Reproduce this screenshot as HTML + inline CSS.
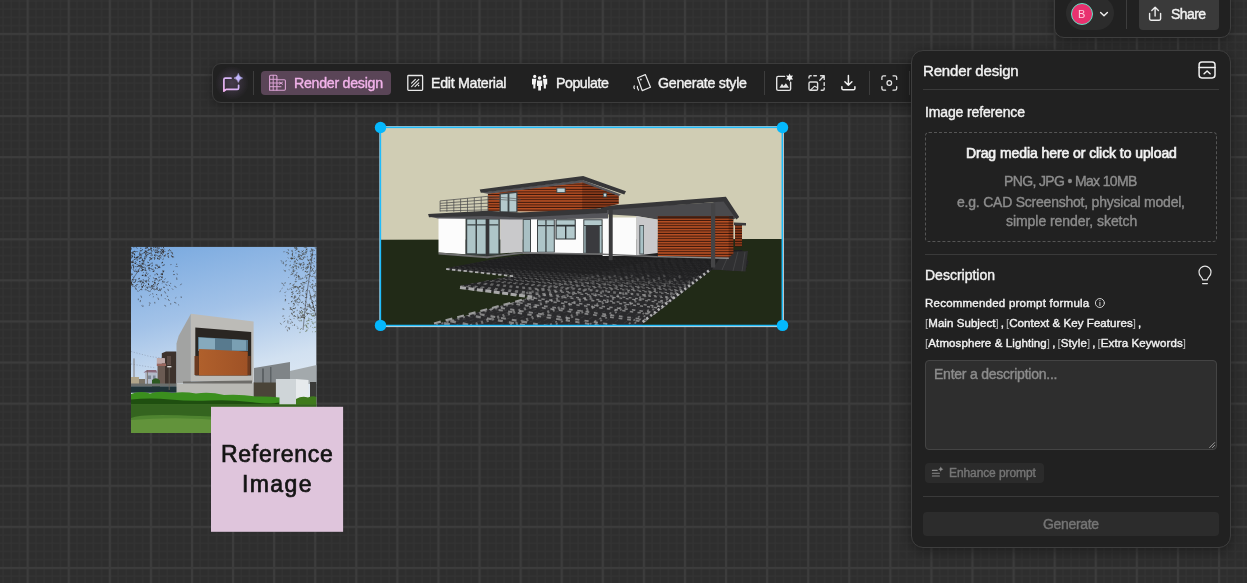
<!DOCTYPE html>
<html lang="en">
<head>
<meta charset="utf-8">
<title>Render design</title>
<style>
*{box-sizing:border-box;margin:0;padding:0}
html,body{width:1247px;height:583px;overflow:hidden;background:#2e2e2e;font-family:"Liberation Sans",sans-serif;color:#f2f2f2}
#canvas{position:absolute;left:0;top:0;width:1247px;height:583px;overflow:hidden}
#grid{position:absolute;left:0;top:0}
.abs{position:absolute}
.t{position:absolute;white-space:nowrap;line-height:1;will-change:transform;-webkit-text-stroke:0.4px currentColor}
/* toolbar */
#toolbar{position:absolute;left:212px;top:63px;width:720px;height:40px;background:#212121;border:1px solid #3c3c3c;border-radius:9px;box-shadow:0 3px 12px rgba(0,0,0,.35)}
.vdiv{position:absolute;width:1px;background:#3d3d3d}
#rd-btn{position:absolute;left:261px;top:71px;width:130px;height:24px;border-radius:4px;background:#5a4557}
/* top right */
#topbar{position:absolute;left:1054px;top:-10px;width:177px;height:48px;background:#212121;border:1px solid #3e3e3e;border-radius:10px;box-shadow:0 3px 12px rgba(0,0,0,.35)}
#avatar-pill{position:absolute;left:1066px;top:-4px;width:48px;height:34px;border-radius:17px;background:#2c2c2c}
#avatar{position:absolute;left:1070.5px;top:3px;width:22px;height:22px;border-radius:50%;background:#e8316f;border:1.5px solid #62e3c4}
#share{position:absolute;left:1139px;top:-4px;width:80px;height:34px;border-radius:4px;background:#3a3a3a}
/* panel */
#panel{position:absolute;left:911px;top:50px;width:320px;height:498px;background:#212121;border:1px solid #3e3e3e;border-radius:12px;box-shadow:0 3px 14px rgba(0,0,0,.4)}
.hdiv{position:absolute;height:1px;background:#3a3a3a}
#drop{position:absolute;left:925px;top:132px;width:292px;height:110px;border:1px dashed #555;border-radius:4px}
#ta{position:absolute;left:925px;top:360px;width:292px;height:90px;background:#2e2e2e;border:1px solid #444;border-radius:4px}
#enh{position:absolute;left:925px;top:462.5px;width:119px;height:20px;background:#2b2b2b;border-radius:4px}
#gen{position:absolute;left:923px;top:512px;width:296px;height:24px;background:#2c2c2c;border-radius:4px}
.t u{text-decoration:none;word-spacing:-1.3px}
.t i{font-style:normal;color:#b4b4b4;-webkit-text-stroke:0}
.grey{color:#8c8c8c}
.dim{color:#757575}
</style>
</head>
<body>
<div id="canvas">
<svg id="grid" width="1247" height="583">
<defs>
<pattern id="minor" x="25.7" y="31.9" width="8.216" height="8.216" patternUnits="userSpaceOnUse">
<path d="M0 2H8.216M2 0V8.216" stroke="#333333" stroke-width="1.1" fill="none"/>
</pattern>
<pattern id="major" x="24.7" y="30.9" width="41.08" height="41.08" patternUnits="userSpaceOnUse">
<path d="M0 3H41.08M3 0V41.08" stroke="#3c3c3c" stroke-width="2.2" fill="none"/>
</pattern>
</defs>
<rect width="1247" height="583" fill="#2e2e2e"/>
<rect width="1247" height="583" fill="url(#minor)"/>
<rect width="1247" height="583" fill="url(#major)"/>
</svg>

<!-- IMGS-START -->
<svg class="abs" style="left:0;top:0" width="1247" height="583">
<defs>
<linearGradient id="sky2" x1="0" y1="0" x2="0.25" y2="1"><stop offset="0" stop-color="#77a8df"/><stop offset=".42" stop-color="#a2c2e8"/><stop offset=".75" stop-color="#d2e1f1"/><stop offset="1" stop-color="#e4ecf4"/></linearGradient>
<linearGradient id="wood2" x1="0" y1="0" x2="1" y2="0"><stop offset="0" stop-color="#b0602c"/><stop offset="1" stop-color="#9f5226"/></linearGradient>
<linearGradient id="pavdark" x1="0" y1="250" x2="0" y2="296" gradientUnits="userSpaceOnUse"><stop offset="0" stop-color="#19191a" stop-opacity=".8"/><stop offset=".45" stop-color="#19191a" stop-opacity=".6"/><stop offset="1" stop-color="#19191a" stop-opacity="0"/></linearGradient>
<clipPath id="refclip"><rect x="131" y="246.7" width="185.6" height="186.4"/></clipPath>
<clipPath id="mainclip"><rect x="380.5" y="127.8" width="401.9" height="197.6"/></clipPath>
<pattern id="stripes" x="0" y="0" width="10" height="2.6" patternUnits="userSpaceOnUse"><rect width="10" height="2.6" fill="#b85023"/><rect y="1.55" width="10" height="1.05" fill="#3a170c"/></pattern>
<pattern id="stripesd" x="0" y="0" width="10" height="2.6" patternUnits="userSpaceOnUse"><rect width="10" height="2.6" fill="#9a411d"/><rect y="1.5" width="10" height="1.1" fill="#2e1209"/></pattern>
</defs>
<g clip-path="url(#refclip)">
<rect x="131" y="246.7" width="185.6" height="186.4" fill="url(#sky2)"/>
<path d="M139.7 252.6l-0.5 -0.8M147.3 262.1l1.6 0.6M129.3 265.1l0.9 0.4M143.3 282.4l0.9 0.8M150.6 287.7l-1.3 -0.7M163.1 248.0l0.8 -1.0M133.2 251.2l-0.8 2.1M134.5 271.6l-0.9 -1.1M147.7 248.8l1.1 0.4M152.5 264.8l-0.7 1.7M144.3 259.2l0.6 -2.0M136.8 271.3l-2.3 -0.4M154.3 258.7l1.0 -0.1M143.1 279.3l1.0 1.4M129.4 275.4l0.2 -1.8M159.5 259.8l-0.6 -1.8M148.9 266.1l1.3 -2.1M145.1 275.2l1.9 0.8M151.3 289.7l0.6 -1.2M141.9 275.4l1.6 0.2M134.0 251.2l2.0 0.8M132.7 256.9l-1.8 1.5M130.9 265.8l-2.3 -0.7M157.5 284.0l-0.3 1.5M140.9 284.9l1.0 -0.3M134.3 256.2l0.2 1.7M149.2 257.6l1.6 0.0M141.3 270.9l2.0 -0.6M146.6 273.2l-0.4 -0.8M160.4 280.3l1.6 -1.6M142.1 263.6l1.5 1.2M130.2 249.0l0.3 1.1M140.2 248.3l1.1 0.0M131.7 262.0l2.3 0.4M150.1 252.5l-0.0 1.4M141.1 251.4l1.5 -2.1M144.8 267.3l0.8 0.5M140.3 257.6l0.5 -1.0M128.8 287.8l-1.0 -0.2M147.6 247.2l-2.5 -0.5M159.1 276.6l-0.1 1.5M134.0 280.0l-2.2 -0.4M139.9 255.8l1.0 -2.4M158.7 281.5l0.9 -1.9M136.2 268.8l-0.5 0.7M129.0 258.3l-0.1 2.0M162.4 265.7l2.4 -1.0M162.4 262.0l0.2 1.2M135.1 255.0l-1.7 -1.7M158.3 267.1l-1.3 -1.8M131.1 275.1l1.9 -1.2M155.0 267.0l1.0 2.0M140.0 281.2l1.5 -0.3M142.4 287.7l-0.2 -1.1M132.6 252.7l1.9 -1.3M133.3 282.4l2.0 -0.2M140.6 270.1l0.6 0.6M163.0 274.6l-2.4 -0.4M143.6 284.4l0.5 -1.0M137.1 258.9l0.1 1.9M137.3 264.4l1.7 1.8M140.7 266.2l-2.1 -1.2M143.1 286.4l-1.8 -0.0M146.8 246.8l-1.1 0.4M128.1 281.2l0.8 1.5M154.1 270.5l-0.8 1.5M148.0 280.5l1.4 1.1M136.9 258.2l0.2 -1.7M148.2 279.4l1.4 -0.8M150.1 268.2l-2.0 -0.2M144.3 269.5l-2.5 0.3M153.2 284.6l1.2 -0.5M148.1 287.5l0.6 -0.9M132.4 265.5l1.1 0.5M130.6 275.5l0.5 -2.4M133.6 277.5l-0.6 -0.9M159.8 288.6l0.5 2.5M142.3 267.4l2.3 -0.1M133.8 265.0l-1.4 -0.1M135.0 260.0l-0.1 -0.8M147.9 265.4l1.4 0.2M150.5 268.5l2.4 1.0M156.4 288.8l1.0 0.8M129.4 280.3l-0.1 1.0M143.2 286.1l0.5 -1.1M133.4 286.4l-1.9 -0.9M131.2 248.5l-0.6 -1.4M130.6 287.3l-1.5 -1.7M131.0 283.7l2.1 1.0M144.3 260.9l-2.3 -0.8M137.6 251.7l-1.2 -0.2M131.9 253.1l1.1 0.4M139.2 259.4l0.1 -1.3M146.0 253.8l-0.5 0.7M137.0 246.7l-0.2 -1.8M134.8 266.9l0.9 -0.4M157.5 265.0l-2.3 0.1M142.2 268.3l-1.0 -2.4M140.3 282.6l-0.5 -1.9M142.6 261.3l1.0 0.3M130.5 278.6l-0.0 1.1M131.0 283.0l1.4 -1.5M138.1 256.7l-0.4 1.6M133.7 265.6l-0.2 2.5M163.0 270.1l0.1 2.5M139.1 261.7l1.5 0.0M145.1 268.1l0.5 1.6M128.2 257.6l1.3 0.8M129.5 247.0l-0.4 1.1M149.1 269.3l0.0 -2.0M153.8 284.7l-1.1 0.9M163.5 252.6l-0.3 -1.9M129.6 282.8l1.5 -1.2M154.4 281.7l1.1 1.3M146.2 282.7l0.8 -2.2M149.0 285.3l-0.8 -1.9M136.3 247.4l1.0 1.1M131.8 282.8l-1.8 -0.7M150.5 275.9l-0.8 0.1M156.7 278.9l-1.8 -0.0M151.7 248.9l-0.1 -1.2M130.7 257.7l-0.2 -1.2M154.6 288.9l-1.5 0.1M145.2 276.1l0.2 -1.9M151.1 249.4l0.8 1.0M154.8 259.4l-0.7 -0.3M130.2 257.8l-1.0 -1.8M152.3 258.8l-1.6 -0.2M144.8 251.2l0.9 -0.7M163.2 287.2l1.6 0.2M157.5 288.6l-1.2 0.4M135.6 287.6l0.5 1.8M133.1 269.1l1.0 -0.3M157.5 268.4l1.6 -1.3M136.3 285.5l-0.8 0.1M128.1 267.6l-1.3 0.4M133.1 261.1l-0.9 2.1M128.1 279.0l0.5 -0.9M161.4 277.4l1.1 -0.8M141.4 263.3l1.9 -0.0M141.0 264.8l-0.1 0.9M131.7 282.7l-0.6 2.4M137.0 257.7l-1.1 -0.1M141.4 288.1l1.7 -1.5M150.7 286.2l1.7 -0.7M153.9 248.2l-0.2 -1.6M155.1 274.4l-0.2 0.9M161.4 251.6l-1.4 0.2M138.7 278.5l1.3 -0.2M151.6 259.2l-1.4 -0.5M134.0 253.1l0.6 2.3M145.9 255.7l2.2 -1.4M144.2 252.1l0.3 0.9M140.3 250.0l0.1 1.3M148.5 285.0l-0.0 -1.5M142.9 269.1l-1.0 1.0M130.2 258.2l1.0 -0.2M146.1 273.7l0.8 -0.9M137.8 256.9l-1.3 0.9M162.3 283.3l0.6 -0.6M129.2 277.2l1.3 -1.0M149.1 246.0l-1.9 1.6M157.7 283.6l1.2 -0.2M131.9 252.8l-2.0 -0.3M161.9 277.8l-1.3 -1.7M144.5 270.3l2.1 0.5M136.4 286.5l-0.8 -1.1M132.6 257.1l-1.3 -1.6M132.0 249.1l-1.8 -0.3M142.0 255.8l-0.7 -0.5M138.9 266.3l1.9 -0.5M159.8 266.9l0.1 1.2M162.6 277.0l-0.3 0.8M145.9 275.7l-1.1 0.6M152.0 286.7l0.1 0.9M140.2 264.5l-0.5 -1.1M156.7 278.5l-1.2 -0.0M162.9 259.7l0.5 -1.1M136.0 279.5l-0.7 2.4M145.8 254.2l0.3 1.5M152.0 287.7l0.9 1.2M135.7 288.9l0.6 0.7M130.2 263.3l1.9 -1.4M154.4 289.9l1.3 -0.6M134.7 287.2l-0.0 -0.9M151.9 262.7l-1.0 1.0M134.1 246.1l-0.3 1.4M162.4 251.4l1.1 -0.3M140.8 282.1l0.7 -1.4M129.8 266.8l-1.7 1.8M134.9 262.0l0.7 -0.5M142.8 281.7l0.1 -0.9M129.3 248.8l1.1 -0.6M154.9 285.5l-0.7 1.1M162.5 273.1l-0.2 2.1M139.4 258.1l2.2 0.1M161.0 273.9l0.8 -0.3M136.4 266.9l2.4 -0.7M141.9 257.0l-1.5 0.7M161.4 254.0l0.7 -2.0M157.6 280.0l-1.1 -0.9M139.5 261.9l0.2 -0.9M135.1 279.1l0.0 0.9M129.2 270.3l-1.2 2.3M159.8 289.5l-0.1 0.9M131.5 267.9l-0.4 -1.6M136.4 264.3l-1.5 -1.4M154.9 283.3l-0.5 -0.9M158.3 258.9l-1.3 -0.6M154.6 254.8l0.0 1.2M133.5 284.9l-1.2 -0.7M142.3 289.7l-1.2 -0.1M157.1 274.7l1.0 -0.1M145.1 282.0l1.3 -2.1M129.5 258.9l0.8 0.8M163.0 271.7l1.3 -0.6M159.2 265.8l-0.1 2.2M162.0 250.7l-1.6 -1.1M135.8 262.2l0.7 0.9M137.2 272.4l-0.7 -1.0M128.4 260.4l-0.5 -1.0M139.2 254.9l0.5 -1.7M130.3 250.5l-1.4 1.1M151.0 250.0l1.1 1.8M142.8 258.5l-0.9 2.4M139.2 270.9l-1.0 1.2M159.1 289.9l-0.8 0.9M154.2 255.0l2.4 0.1M143.3 282.1l-2.0 1.3M144.6 253.2l1.8 0.2M151.1 286.0l1.6 1.0M141.4 268.2l0.8 1.0M146.8 286.7l1.3 1.1M157.0 288.5l0.3 1.0M162.0 288.9l-0.9 0.1M161.3 263.1l1.6 -1.1M157.7 253.1l0.3 -1.2M142.6 283.2l0.5 -1.0M135.9 263.6l-1.5 -0.2M132.4 256.9l-0.4 -2.4M129.5 270.7l0.0 -0.9M158.2 251.2l-1.5 -1.0M150.6 259.5l-1.6 0.9M143.3 275.0l-1.5 0.5M128.8 273.2l-1.2 0.1M155.5 280.3l-1.1 0.3M145.0 250.7l1.1 1.1M131.3 265.4l-0.9 -0.1M150.9 249.6l-0.2 -2.2M146.4 248.4l-1.5 -0.0M162.2 252.0l1.6 -2.0M154.4 281.9l0.9 2.4M145.7 288.1l0.9 -0.6M156.4 286.9l1.3 0.6M155.2 253.0l1.0 -0.8M157.4 252.3l-2.5 -0.0M135.5 257.6l-1.4 -0.1M129.3 254.0l1.3 2.1M152.5 285.4l1.1 1.9M132.1 269.4l-0.9 -1.1" stroke="#2c2622" stroke-width="0.9" stroke-opacity="0.8" fill="none"/>
<path d="M176.4 287.4l-2.1 -1.2M142.6 306.7l-1.0 -1.1M173.1 274.6l1.8 -0.1M153.9 296.6l-1.0 0.4M170.7 265.1l0.5 -1.1M166.1 306.3l-1.7 -1.0M151.8 263.1l1.0 0.2M165.1 282.0l-2.4 -0.2M143.8 273.0l-0.5 -0.7M138.1 278.6l1.1 0.9M147.9 288.7l-1.0 -0.6M165.5 283.9l1.6 1.9M148.7 269.6l1.6 1.1M176.3 297.4l-1.0 0.7M138.5 291.4l-1.3 -0.5M166.4 282.5l2.0 -0.8M148.9 302.8l1.7 0.5M155.9 273.5l2.1 0.8M138.5 287.2l1.0 -0.4M146.8 289.8l-2.0 -0.1M173.8 270.7l-0.5 1.2M140.1 302.1l0.4 -2.0M138.3 300.2l-0.0 -1.6M170.6 282.9l0.1 1.0M148.2 264.7l-1.1 1.8M168.6 300.2l-0.3 -1.2M162.4 282.2l0.4 -1.7M149.7 291.2l1.2 -0.3M176.7 263.7l-0.1 1.2M170.7 304.6l-0.0 -1.4M176.7 277.5l0.2 2.4M165.8 293.5l-1.3 -2.2M158.7 299.9l-0.8 -2.2M157.2 294.9l-1.2 -0.6M147.3 290.4l2.2 1.1M144.4 264.2l1.9 1.5M153.2 269.2l0.9 0.2M168.5 290.9l-0.7 -2.0M140.9 289.0l-1.5 1.7M174.1 302.2l2.2 1.0M178.2 304.6l0.9 0.7M142.9 264.5l1.3 -1.8M165.9 299.3l-0.9 -1.0M142.4 267.3l0.1 -1.2M152.0 281.6l1.3 0.2M150.4 294.5l-0.9 1.0M180.4 285.2l1.1 -1.5M139.4 281.2l-2.0 0.9M153.3 294.0l-1.2 -0.3M175.9 267.0l0.5 -1.0M138.1 271.9l0.2 -2.6M138.2 284.6l-2.2 0.1M146.1 284.8l-1.3 1.9M149.5 304.5l-0.2 1.2M168.8 284.9l1.5 1.2M141.6 297.7l-0.7 -2.1M165.6 278.6l-1.2 0.9M177.2 266.8l0.6 -0.5M147.1 274.6l1.4 -1.0M154.7 301.9l0.2 1.6M161.4 296.2l0.0 -2.0M153.3 277.4l1.3 1.9M167.1 295.6l0.8 1.4M172.0 288.5l1.1 1.2M176.9 273.5l0.5 1.3M168.9 300.1l0.6 0.9M148.9 277.4l-1.1 -0.2M152.4 271.3l2.1 -0.3M142.5 305.3l1.2 0.9M181.3 298.0l-0.2 -1.6" stroke="#2c2622" stroke-width="0.9" stroke-opacity="0.6" fill="none"/>
<path d="M151.5 253.7l0.9 0.7M156.9 246.4l-1.8 1.3M165.4 252.0l-1.1 -1.2M150.0 253.2l-1.8 1.2M171.4 251.2l-1.9 -1.0M157.8 248.7l-0.4 -2.3M167.7 254.4l1.2 -1.6M164.0 251.4l-0.7 1.8M148.7 251.0l0.4 -2.0M163.6 249.0l-1.4 0.7M163.4 250.9l-1.1 -2.2M151.1 253.9l0.3 -1.5M159.7 257.7l1.7 0.4M150.5 255.4l1.6 -0.6M148.8 252.9l-2.0 -0.5M160.3 253.7l0.8 -1.5M157.5 257.4l0.5 2.0M157.0 255.2l1.8 1.8M156.0 246.7l-0.2 1.5M146.4 251.0l-1.8 1.0M155.9 249.2l0.3 2.1M172.3 252.3l0.4 2.2M157.0 248.5l1.5 1.6M168.7 253.6l-1.8 0.3M152.3 257.6l-1.2 1.6M168.9 255.8l-1.3 0.3M161.4 247.5l0.7 -1.2M169.8 249.2l-0.9 0.9M157.9 248.2l2.1 0.0M153.9 248.9l-0.5 1.6M158.0 253.6l-0.8 -1.2M172.0 256.3l2.1 0.8M171.4 255.4l1.5 1.8M163.7 246.2l2.5 0.2M164.4 249.0l0.8 0.6M152.5 255.3l-0.6 0.9M171.3 255.5l1.2 2.1M163.0 255.4l-1.2 -2.1M168.1 256.1l0.7 1.9M160.9 254.9l-2.2 0.9M161.5 249.2l0.1 1.0M159.8 246.7l-1.0 0.2M159.8 252.0l-2.3 -0.6M146.2 256.1l-1.8 0.4M164.6 256.1l-1.1 1.1M172.9 246.9l-1.3 -1.5M146.8 253.3l-1.0 -2.3M155.3 257.8l-1.7 -0.1M171.1 246.4l-0.4 -1.9M155.5 256.3l-1.1 1.2M160.7 255.2l0.4 1.5M157.8 252.6l0.6 -1.2M169.2 250.8l-1.3 -0.0M160.2 257.7l-1.3 -1.8M155.3 249.8l-0.6 1.8M163.8 255.4l2.0 0.5M170.8 252.5l1.3 0.4M146.2 248.3l1.7 -0.9M164.4 255.5l1.6 -1.0M163.3 253.5l-0.6 -1.8" stroke="#3a302a" stroke-width="0.9" stroke-opacity="0.7" fill="none"/>
<path d="M308.7 261.3l-0.8 -1.4M310.8 253.3l0.4 0.8M311.1 311.8l-0.8 -1.2M312.4 302.6l-1.2 -0.5M298.9 276.4l-0.7 1.4M307.7 313.2l1.7 0.6M292.0 254.6l0.7 -1.7M314.9 278.1l1.5 0.1M306.4 313.5l1.6 -0.2M301.7 253.3l-0.7 -0.9M294.9 247.1l2.0 0.1M294.2 315.6l2.0 1.2M294.4 247.3l-0.2 -1.2M310.1 259.5l2.1 0.7M309.6 307.6l-0.1 -0.9M307.3 297.1l-2.4 0.6M297.6 315.4l-0.2 -0.8M291.4 292.9l0.4 -0.9M299.1 298.5l1.2 2.0M303.6 250.3l-1.2 1.4M302.4 294.7l1.4 1.8M300.4 292.4l-1.1 -1.1M301.0 302.6l2.1 -0.8M305.7 267.1l2.4 0.9M309.3 305.6l-0.9 1.6M316.4 305.9l-1.1 -0.8M302.1 309.9l-1.5 1.4M306.6 310.5l0.5 -1.2M291.0 264.9l-1.6 0.9M312.2 309.9l2.2 0.6M312.1 308.4l-1.2 -0.6M313.1 304.1l-1.0 -2.2M300.0 252.1l-2.1 -0.7M296.2 300.0l1.1 -0.5M306.8 294.8l-1.1 0.3M297.6 300.1l0.4 -1.6M293.3 304.1l0.2 -1.2M306.1 310.6l1.3 -1.1M303.4 288.4l0.4 1.1M295.7 296.5l-1.2 1.4M301.5 283.2l0.5 0.7M316.9 272.9l1.5 1.2M311.5 257.2l-1.2 -0.8M304.5 247.5l2.5 0.5M313.5 281.0l-1.2 -0.5M311.3 276.7l2.1 -0.7M312.3 315.4l-0.0 0.9M296.2 259.0l0.8 0.4M305.5 308.7l-2.4 0.6M314.7 250.6l-1.2 -0.9M294.1 315.1l-0.1 1.8M307.7 314.9l-0.7 -1.3M302.7 257.5l2.5 -0.6M296.8 248.8l-0.1 1.4M314.5 311.1l0.5 -0.8M311.4 297.1l-1.6 -2.1M292.4 256.4l0.1 -2.5M308.6 267.5l-1.8 -1.2M293.7 269.3l-0.0 1.0M303.5 258.1l0.1 1.1M308.6 246.9l-0.2 -1.1M291.9 312.8l0.5 2.4M313.5 310.0l1.0 1.2M293.5 312.9l1.1 -1.6M302.8 270.5l0.7 -1.5M307.3 256.3l0.2 0.9M309.6 285.8l1.5 1.9M297.9 275.6l0.7 1.1M312.8 270.1l0.8 1.5M299.3 311.0l1.9 1.7M292.5 310.4l-0.6 -1.0M303.4 266.6l-0.1 1.2M300.5 317.4l2.5 -0.0M293.5 266.8l0.7 -0.5M309.9 267.1l0.8 -0.1M312.0 270.5l0.5 0.6M312.6 283.9l0.6 1.5M314.7 261.7l-0.9 -0.5M295.7 301.5l-0.3 -1.1M293.1 252.3l-1.3 -1.1M298.1 260.8l-1.6 -1.3M312.1 288.0l0.3 0.9M310.1 275.4l-0.2 -0.9M312.1 270.1l1.3 -2.0M303.8 247.1l1.4 -0.9M313.7 265.2l0.9 2.1M300.5 257.8l-1.3 1.4M291.1 283.4l-1.6 0.6M294.1 297.5l1.0 -2.2M299.3 297.2l-1.6 1.5M292.6 308.8l1.6 -0.5M304.3 284.2l-0.8 -0.2M316.2 262.1l0.4 0.9M297.5 304.8l1.0 0.2M309.2 260.0l1.9 0.2M306.0 283.6l-0.3 -0.9M313.6 297.6l1.0 0.3M303.8 282.1l-0.2 1.0M301.5 255.9l-2.0 -1.3M294.8 287.2l-0.0 -1.1M312.5 313.5l-1.2 1.0M312.8 283.8l-2.0 1.5M311.2 270.4l0.1 1.4M302.3 316.6l0.8 -2.3M312.2 307.0l1.6 0.6M315.9 313.3l0.0 1.6M307.4 272.2l-0.9 -0.2M302.3 282.3l1.0 0.1M316.2 301.9l1.8 -0.7M312.0 309.7l0.6 -0.6M307.7 265.1l-0.6 -1.2M305.1 312.6l-0.9 -0.9M304.5 277.2l1.3 -0.4M298.9 292.6l1.4 1.3M315.9 283.0l-0.2 1.6M304.9 256.7l0.7 0.7M298.6 275.3l-0.3 1.2M293.3 285.3l1.0 -1.6M305.8 292.8l0.6 2.0M303.0 285.5l-1.2 -1.1M299.1 263.4l0.3 1.7M301.0 288.2l1.4 0.1M313.4 263.2l-1.6 -0.6M298.4 317.1l-0.6 2.1M295.1 250.8l1.1 -1.2M292.6 273.9l-2.0 0.8M293.8 262.2l2.1 -0.5M295.0 270.3l-1.2 1.6M307.0 307.2l0.7 -1.6M310.2 299.5l0.1 -1.7M311.4 297.0l0.9 -0.5M313.6 246.3l0.2 -1.8M303.9 315.3l-1.4 -0.7M311.4 308.8l-1.2 -0.9M302.8 279.0l-0.2 -1.3M301.2 286.0l-1.0 0.9M311.5 307.2l-1.6 0.0M295.8 267.9l1.1 1.5M306.1 252.3l1.2 -0.7M312.9 306.3l1.1 -0.3M302.1 311.6l0.9 0.1M305.7 281.8l1.9 -1.1M305.0 317.9l-1.7 -0.2M308.8 274.0l-1.2 1.5M300.1 314.2l-0.8 -1.6M293.6 273.0l-1.5 1.1M305.9 309.3l1.6 -0.4M302.4 291.0l1.4 -0.0M304.8 304.7l0.7 1.2M316.4 305.5l-1.0 -0.1M314.3 295.7l1.1 -2.3M314.1 276.3l0.7 1.1M304.3 282.4l0.4 1.0M307.4 289.4l-1.6 2.1M307.5 249.0l-1.9 1.2M299.0 295.7l1.3 0.0M312.9 288.2l-0.6 -1.0M303.9 285.8l-0.2 2.0M304.8 317.8l-1.4 -0.7M294.2 257.3l0.1 -1.0M293.6 258.3l-2.3 -0.3M306.9 304.1l0.8 0.3M311.0 269.2l-0.3 -1.4M295.4 265.2l2.0 1.4M306.1 271.1l-1.4 0.5M292.4 310.1l-2.2 -1.3M302.4 290.7l0.0 0.9M315.2 307.5l-1.0 2.2M312.2 267.9l-2.0 -1.5M303.9 314.4l0.1 1.5M309.7 261.9l-0.9 2.2M303.6 303.1l0.0 1.1M300.3 259.4l1.3 -0.2M305.6 254.3l-1.5 -0.3M301.5 250.7l1.6 1.6M300.1 263.6l0.5 1.2M297.2 248.5l-0.7 -1.2M295.1 296.8l1.1 0.7M312.7 255.2l-2.2 0.8M311.9 257.5l-1.3 1.7M300.8 315.0l0.7 2.4M304.1 262.4l-1.0 0.3M309.4 264.8l1.5 -1.1M300.6 263.7l-0.9 -0.7M313.7 254.8l-1.8 -0.1M298.0 301.6l-1.5 1.3M305.8 268.4l-0.7 0.6M295.6 307.3l-0.9 1.8M293.8 286.5l-1.1 1.3M298.7 250.7l-0.5 1.1M294.3 297.6l-0.3 1.5M314.6 301.8l1.7 -1.6M294.4 265.9l2.0 0.4M308.3 271.3l-1.7 1.0M309.2 263.9l0.8 -1.2M307.3 259.1l1.8 1.6M310.1 297.3l0.8 0.2M295.2 260.3l-0.5 1.4M292.0 268.4l-0.7 -0.9M312.8 287.1l-0.3 -1.2M302.3 295.3l-0.5 0.7M312.7 301.9l-0.2 0.9M313.2 289.7l1.2 0.4M293.9 303.0l0.6 2.4M310.5 252.2l-0.5 -1.4M310.4 305.7l-0.2 0.9M315.6 276.5l1.9 -0.9M310.2 305.8l-1.1 -1.2M292.4 296.3l-1.5 0.7M315.1 255.2l0.1 -0.9M309.3 304.0l-0.1 1.8M316.2 291.9l-1.2 -0.3M292.5 271.8l-1.0 0.6M299.1 255.8l-0.5 -1.9M297.2 263.4l-1.6 -0.2M315.3 271.3l-0.7 2.3M294.7 286.6l-1.1 2.0M305.3 300.8l1.0 1.7M306.6 279.2l0.2 -2.3M294.0 266.8l-0.7 0.9M292.6 266.2l0.7 2.0M302.6 254.1l-0.7 1.5M300.4 258.1l0.7 0.4M316.8 300.0l1.8 1.1M316.5 286.6l1.3 1.1M302.3 259.7l-0.8 -0.2M314.9 292.4l-1.7 -1.8M308.0 264.1l0.0 1.0M291.7 301.8l0.7 -1.1M295.8 291.9l1.4 -2.0M295.4 302.5l1.0 -1.9M299.5 259.3l0.6 -1.2M300.6 285.7l-1.6 1.7M297.2 249.0l-1.8 -0.8M312.3 296.8l2.1 -1.4M303.9 282.0l0.7 1.1M306.1 251.8l-0.4 -1.0M302.5 315.8l0.7 0.5M302.4 259.7l-0.1 -0.8M312.9 307.6l0.4 -1.5M298.4 293.6l-1.6 -0.1M299.8 277.6l-1.2 -2.0M314.5 257.8l-0.5 1.5M305.6 271.1l0.3 0.9M299.4 279.2l2.4 -0.4M313.5 316.2l1.9 -0.5M312.1 250.3l-0.8 -1.7M298.7 287.1l1.6 -0.5M307.8 267.6l-1.3 2.0M291.7 259.6l-0.7 -1.4M293.2 293.6l-1.3 1.3M301.8 284.2l-1.4 -0.6M294.0 259.0l1.4 -1.1M293.9 308.1l-0.0 1.0M304.8 264.1l-1.8 0.1M296.9 287.2l1.3 1.1M306.3 251.8l-0.8 0.5M302.4 308.2l-2.0 -0.7M310.7 254.3l2.1 -0.1M293.7 305.8l-0.9 0.7M316.0 286.5l0.2 -1.0M311.2 250.1l0.1 1.5M291.4 288.8l0.3 1.3M309.4 276.7l1.5 -1.2M313.7 286.5l2.1 -1.2M295.4 299.7l-1.2 1.8M308.7 305.4l1.1 1.0M310.2 314.3l-0.2 -0.9M306.7 253.2l-2.1 -0.7M293.9 312.6l-0.6 -1.1M296.0 278.2l1.0 -1.6M294.0 247.5l1.7 1.4M295.8 285.9l-0.5 2.0M300.9 256.4l1.3 -1.2M308.9 304.2l0.8 -0.3M299.9 256.9l-2.4 -0.0M311.8 248.6l0.9 2.1M308.7 274.3l-1.1 0.2M313.0 274.3l1.3 -1.4M293.0 269.7l0.5 2.4M306.3 249.1l0.7 1.3M303.2 287.5l-1.1 0.9M291.2 287.7l-0.4 0.7M302.9 317.0l1.0 0.3M308.4 265.6l-0.2 1.7M297.8 287.0l-2.5 -0.4M316.8 248.5l-2.0 -0.8M313.7 301.7l-1.3 -1.4M300.4 266.3l0.7 -2.3M315.4 295.1l-0.7 2.1M310.2 282.6l-0.9 -1.1M305.3 275.2l1.3 0.5M299.4 317.2l-1.5 0.2M297.3 262.9l-0.6 0.8M291.2 308.7l-1.5 0.5M305.8 267.8l0.4 0.8M298.8 268.2l-0.3 -1.8M315.4 270.5l1.6 -0.9M293.1 258.9l-2.3 -1.2M300.3 301.8l-2.1 1.0" stroke="#3a3428" stroke-width="0.9" stroke-opacity="0.7" fill="none"/>
<path d="M281.6 288.8l1.0 -0.8M286.2 251.8l0.7 1.1M296.9 267.5l-0.9 0.7M294.5 319.1l-0.7 -0.9M297.6 327.1l-0.8 -0.6M299.4 320.0l-0.6 0.9M284.5 293.0l1.4 -1.4M302.1 267.0l-1.0 1.9M295.6 282.4l-0.6 -1.3M281.4 283.1l1.8 0.5M288.0 289.5l-1.0 -0.7M291.1 251.1l1.6 -0.8M303.7 254.5l-1.6 -1.4M287.9 257.5l0.6 0.9M298.4 257.2l0.6 -1.4M292.9 297.1l-1.9 -0.7M294.4 276.5l-0.1 -1.3M297.1 311.1l0.2 -1.3M298.5 328.2l-1.2 0.4M292.6 325.3l0.6 0.6M291.4 302.4l0.2 -1.4M303.7 268.3l0.0 -1.0M280.7 260.7l1.6 0.6M293.3 264.5l1.4 -0.5M283.6 264.2l-0.2 -2.5M283.9 252.3l0.2 -1.2M303.6 289.9l-0.9 -1.1M299.2 286.8l-1.1 2.2M282.6 308.7l1.8 0.8M289.6 319.1l1.7 0.7M289.8 323.5l1.8 -0.7M285.4 270.2l-0.1 1.6M285.6 266.3l0.1 -2.0M287.2 329.5l0.4 1.8M283.8 319.0l0.9 -0.9M298.0 315.8l-0.3 1.4M291.7 321.3l1.1 1.7M294.3 286.2l-2.1 -1.1M285.0 320.7l-1.4 1.7M300.7 264.6l1.7 -2.0M287.1 252.0l2.0 1.6M280.2 322.9l1.2 1.7M282.3 263.5l-0.4 -0.9M288.1 323.5l-0.5 -2.3M303.5 252.6l0.2 2.2M296.5 253.0l-1.2 -0.0M290.3 258.4l2.6 0.3M287.6 320.3l1.2 1.2M283.3 284.3l0.9 1.8M283.6 309.1l-1.0 -0.0M288.5 289.7l1.2 -0.7M285.2 327.4l1.6 -1.4M286.6 264.2l-0.1 0.9M281.0 290.7l-1.5 1.0M288.7 250.8l-0.7 -1.8M293.1 293.9l-0.9 -2.4M301.0 307.4l-1.1 0.8M290.1 327.8l-1.1 1.0M289.8 261.4l0.8 -0.0M294.6 324.1l-0.1 1.9M289.0 269.3l0.3 1.0M300.2 312.7l0.7 -0.5M296.7 275.9l-1.1 -1.4M287.6 327.7l2.1 0.0M300.5 290.8l-2.2 -1.4M285.6 300.4l-0.1 -1.5M297.1 281.5l-1.9 -0.3M296.3 275.8l-1.2 -1.3M285.4 299.0l-0.2 2.4M291.4 307.7l-1.6 -0.2M285.3 261.4l1.6 -0.8M292.6 292.2l0.5 -1.1M284.1 315.8l-1.9 0.5M299.9 321.5l0.6 -0.6M289.2 316.6l0.4 -0.9M283.7 270.1l1.2 0.9M299.3 291.7l-0.9 0.3M289.5 329.8l-0.5 -1.5M291.5 313.9l0.1 -1.1M296.3 279.4l-1.2 -0.2M288.9 277.2l-0.6 0.6M284.8 295.6l1.0 0.4M297.2 272.0l-0.6 1.1M300.0 257.3l-1.5 -1.8M284.8 283.9l0.5 -1.8M288.9 253.5l-1.4 0.5M297.1 273.6l-1.6 1.1M299.5 278.2l-1.4 1.2M302.2 265.3l2.0 -0.4M288.9 303.2l-0.4 0.8" stroke="#3a3428" stroke-width="0.9" stroke-opacity="0.55" fill="none"/>
<path d="M312.1 319.6l-1.7 -0.3M314.4 327.1l1.8 0.3M307.4 321.2l0.8 -1.3M307.6 329.8l-1.6 0.6M308.2 328.5l-1.0 -1.9M306.4 312.8l-0.8 -1.6M312.3 327.4l0.9 0.8M301.2 328.3l0.8 0.6M312.1 323.3l1.9 0.7M311.4 321.7l1.9 0.7M306.7 323.7l2.3 -0.0M314.0 314.9l-0.9 1.5M300.1 331.8l-0.2 1.3M305.0 317.1l1.1 -1.4M308.2 320.4l1.3 0.4M313.9 328.0l0.8 -1.0M303.2 313.0l-1.4 -0.3M307.4 321.8l-1.3 -0.7M312.8 316.0l1.6 -0.9M300.8 318.3l-1.5 -0.3M309.0 318.5l-0.3 2.2M304.7 326.2l0.6 -1.8M307.3 330.7l-2.2 0.8M300.9 320.7l-0.6 -0.7M313.8 313.4l-0.9 -0.6M314.8 323.2l0.5 -1.6M310.8 325.5l-0.3 1.1M313.4 314.9l1.0 -0.6M301.6 313.9l0.5 -2.5M306.6 325.2l-0.1 2.4M311.0 315.1l1.9 0.7M300.7 328.7l-0.3 1.2M309.3 318.4l-1.0 -0.4M314.6 318.5l0.6 -0.9M312.8 331.6l-0.7 0.5M306.1 324.8l0.3 1.8M301.5 321.3l-0.2 -1.6M310.9 314.3l0.5 -0.9M314.8 331.9l1.6 -0.6M304.7 319.0l0.0 -1.7" stroke="#55603a" stroke-width="0.9" stroke-opacity="0.6" fill="none"/>
<path d="M131 262L142 254L152 248M131 282L140 268L147 256M303 330L306 300L310 272L313 250M316 316L309 290" stroke="#2c2622" stroke-width=".8" fill="none" stroke-opacity=".6"/>
<path d="M161.8 353.2L166 351.6H176.5V384H161.8Z" fill="#3d322c"/>
<path d="M167 356H171V365H167Z" fill="#5a4a44"/>
<path d="M156.8 358H165V363.5H156.8Z" fill="#bfa9a8"/><path d="M156.8 363.5H166V366H156.8Z" fill="#9a675e"/><path d="M157.5 366H165V384H157.5Z" fill="#6a5a52"/>
<path d="M143.5 372.6L147 370H156.2L157.2 372.8Z" fill="#8a6a7c"/><path d="M145 372.8H156.8V383H145Z" fill="#b2bac8"/><path d="M148 375.5H151V379H148ZM153 375.5H155.5V379H153Z" fill="#7d8796"/>
<path d="M131 377H139V386H131Z" fill="#b0a58a"/><path d="M139 379H145V386H139Z" fill="#7a7468"/>
<path d="M152 380Q156 376.5 160 380.5V387H152Z" fill="#2d5a22"/>
<path d="M131 383.4H177V386.8H131Z" fill="#6a6e6c"/>
<path d="M131 386.6H177V392.8H131Z" fill="#1f3338"/>
<path d="M134 358.4V377M147.4 370V384M169.2 367V390" stroke="#6e665e" stroke-width=".8" fill="none"/>
<path d="M167.2 366H171.4V367.4H167.2Z" fill="#d8d8d8"/>
<path d="M131 351.5L150 356.5L165 358.5M131 364L156 368" stroke="#6a7080" stroke-width=".5" stroke-opacity=".7" stroke-dasharray="1.2 1.6" fill="none"/>
<path d="M254 368L290 362V383H254Z" fill="#7f8487"/>
<path d="M290 371L316.6 365V384H290Z" fill="#a3a9ac"/>
<path d="M262 368.5H264V383H262ZM270 367H271.5V383H270Z" fill="#5d6265"/>
<path d="M176.5 343.5L178.6 336L190.9 313.8V382.5L176.5 383.5Z" fill="#a2a3a2"/>
<path d="M190.9 313.8L253.6 321.6V382.4L190.9 381Z" fill="#bcbbb7"/>
<path d="M195.3 327.5L251.2 331.9V375.5H195.3Z" fill="#2a2622"/>
<path d="M198 337L248 340V351H198Z" fill="#587a8e"/>
<path d="M199 337.5L215 338.5V349.5H199Z" fill="#86aabd"/><path d="M232 339.5L246 340.3V350.5H232Z" fill="#7a9fb3"/>
<path d="M198.8 349.1L247.8 351.5V375.5H198.8Z" fill="url(#wood2)"/>
<path d="M194.5 356H198.8V375H194.5ZM247.8 356H250.5V375H247.8Z" fill="#6c3a1f"/>
<path d="M176.5 383.4L253.6 382.4V397H176.5Z" fill="#b9b9b4"/>
<path d="M183 381.5L252 380.5V383.5H183Z" fill="#6e6d69"/>
<path d="M253.6 382.4H276V398H253.6Z" fill="#4a4438"/>
<path d="M275.9 379H296V405H275.9Z" fill="#cfd5d8"/><path d="M296 379L308.5 380V405H296Z" fill="#e6eaec"/>
<path d="M310 382H316.6V397H310Z" fill="#3a3a38"/>
<path d="M131 394Q140 390.5 150 393.5Q160 390.5 172 393Q184 391.5 196 393.5Q210 391.5 224 395Q240 394 256 396.5Q268 396 279.5 397.5V405H131Z" fill="#3b8f1e"/>
<path d="M296 399Q302 395.5 308 397.5Q313 395.5 316.6 397V405H296Z" fill="#3f7a1c"/>
<path d="M131 399.5Q150 397.5 170 399.5T210 400.5T250 402T279 402.5V405H131Z" fill="#1f4f10"/>
<rect x="131" y="404.5" width="185.6" height="29" fill="#4f8430"/>
<path d="M131 404.5H316.6V417Q260 419 200 416T131 418Z" fill="#34641f"/>
<path d="M131 420Q180 416 230 421T316.6 418V433.1H131Z" fill="#6b9a40" fill-opacity=".7"/>
</g>
<rect x="211" y="406.8" width="132.1" height="125" fill="#dfc5dc"/>
<g clip-path="url(#mainclip)">
<rect x="380" y="127" width="403" height="199" fill="#d0cdb4"/>
<path d="M380 239.8L560 239.4L783 239V326H380Z" fill="#212a17"/>
<clipPath id="pavclip"><path d="M446.2 268.3L500 258L560 250L660 250L742 250L748.5 262L745 271L712 269.5L641 325.5H431.7L532.2 296.7L460 288.7V285.8L513.3 275.7L446.2 269.8Z"/></clipPath>
<path d="M446.2 268.3L500 258L560 250L660 250L742 250L748.5 262L745 271L712 269.5L641 325.5H431.7L532.2 296.7L460 288.7V285.8L513.3 275.7L446.2 269.8Z" fill="#2a2a2c"/>
<g clip-path="url(#pavclip)">
<path d="M749 239L300.0 340M749 239L313.0 340M749 239L326.0 340M749 239L339.0 340M749 239L352.0 340M749 239L365.0 340M749 239L378.0 340M749 239L391.0 340M749 239L404.0 340M749 239L417.0 340M749 239L430.0 340M749 239L443.0 340M749 239L456.0 340M749 239L469.0 340M749 239L482.0 340M749 239L495.0 340M749 239L508.0 340M749 239L521.0 340M749 239L534.0 340M749 239L547.0 340M749 239L560.0 340M749 239L573.0 340M749 239L586.0 340M749 239L599.0 340M749 239L612.0 340M749 239L625.0 340M749 239L638.0 340M749 239L651.0 340M749 239L664.0 340M749 239L677.0 340M749 239L690.0 340M749 239L703.0 340M749 239L716.0 340M749 239L729.0 340M749 239L742.0 340M749 239L755.0 340" stroke="#6a6a6c" stroke-width=".8" stroke-opacity=".3" stroke-dasharray="4 3" fill="none"/>
<path d="M380 310.0L800 397.6" stroke="#a2a2a2" stroke-width="2.60" stroke-opacity="0.75" stroke-dasharray="5.8 7.3" stroke-dashoffset="0.0" fill="none"/>
<path d="M380 307.0L800 391.0" stroke="#a2a2a2" stroke-width="2.50" stroke-opacity="0.75" stroke-dasharray="5.6 7.0" stroke-dashoffset="3.9" fill="none"/>
<path d="M380 299.4L800 374.0" stroke="#a2a2a2" stroke-width="2.22" stroke-opacity="0.75" stroke-dasharray="5.0 6.2" stroke-dashoffset="3.5" fill="none"/>
<path d="M380 297.2L800 369.2" stroke="#a2a2a2" stroke-width="2.14" stroke-opacity="0.75" stroke-dasharray="4.8 6.0" stroke-dashoffset="6.7" fill="none"/>
<path d="M380 291.6L800 356.6" stroke="#a2a2a2" stroke-width="1.93" stroke-opacity="0.75" stroke-dasharray="4.3 5.4" stroke-dashoffset="6.1" fill="none"/>
<path d="M380 289.9L800 352.9" stroke="#a2a2a2" stroke-width="1.87" stroke-opacity="0.75" stroke-dasharray="4.2 5.2" stroke-dashoffset="0.0" fill="none"/>
<path d="M380 285.6L800 343.1" stroke="#a2a2a2" stroke-width="1.71" stroke-opacity="0.75" stroke-dasharray="3.8 4.8" stroke-dashoffset="0.0" fill="none"/>
<path d="M380 284.3L800 340.2" stroke="#a2a2a2" stroke-width="1.66" stroke-opacity="0.75" stroke-dasharray="3.7 4.7" stroke-dashoffset="2.6" fill="none"/>
<path d="M380 280.8L800 332.4" stroke="#a2a2a2" stroke-width="1.54" stroke-opacity="0.75" stroke-dasharray="3.4 4.3" stroke-dashoffset="2.4" fill="none"/>
<path d="M380 279.7L800 330.0" stroke="#a2a2a2" stroke-width="1.50" stroke-opacity="0.75" stroke-dasharray="3.4 4.2" stroke-dashoffset="4.7" fill="none"/>
<path d="M380 276.9L800 323.7" stroke="#a2a2a2" stroke-width="1.39" stroke-opacity="0.75" stroke-dasharray="3.1 3.9" stroke-dashoffset="4.4" fill="none"/>
<path d="M380 276.0L800 321.7" stroke="#a2a2a2" stroke-width="1.36" stroke-opacity="0.75" stroke-dasharray="3.0 3.8" stroke-dashoffset="0.0" fill="none"/>
<path d="M380 273.6L800 316.4" stroke="#a2a2a2" stroke-width="1.27" stroke-opacity="0.75" stroke-dasharray="2.9 3.6" stroke-dashoffset="0.0" fill="none"/>
<path d="M380 272.9L800 314.8" stroke="#a2a2a2" stroke-width="1.25" stroke-opacity="0.75" stroke-dasharray="2.8 3.5" stroke-dashoffset="2.0" fill="none"/>
<path d="M380 270.9L800 310.4" stroke="#a2a2a2" stroke-width="1.17" stroke-opacity="0.75" stroke-dasharray="2.6 3.3" stroke-dashoffset="1.8" fill="none"/>
<path d="M380 270.3L800 309.0" stroke="#a2a2a2" stroke-width="1.15" stroke-opacity="0.75" stroke-dasharray="2.6 3.2" stroke-dashoffset="3.6" fill="none"/>
<path d="M380 268.6L800 305.2" stroke="#a2a2a2" stroke-width="1.09" stroke-opacity="0.75" stroke-dasharray="2.5 3.1" stroke-dashoffset="3.5" fill="none"/>
<path d="M380 268.1L800 304.0" stroke="#a2a2a2" stroke-width="1.07" stroke-opacity="0.75" stroke-dasharray="2.5 3.1" stroke-dashoffset="0.0" fill="none"/>
<path d="M380 266.6L800 300.7" stroke="#a2a2a2" stroke-width="1.01" stroke-opacity="0.75" stroke-dasharray="2.5 3.1" stroke-dashoffset="0.0" fill="none"/>
<path d="M380 266.1L800 299.6" stroke="#a2a2a2" stroke-width="1.00" stroke-opacity="0.75" stroke-dasharray="2.5 3.1" stroke-dashoffset="1.8" fill="none"/>
<path d="M380 264.8L800 296.7" stroke="#a2a2a2" stroke-width="0.95" stroke-opacity="0.5" stroke-dasharray="2.5 3.1" stroke-dashoffset="1.8" fill="none"/>
<path d="M380 264.4L800 295.8" stroke="#a2a2a2" stroke-width="0.93" stroke-opacity="0.5" stroke-dasharray="2.5 3.1" stroke-dashoffset="3.5" fill="none"/>
<path d="M380 263.3L800 293.3" stroke="#a2a2a2" stroke-width="0.89" stroke-opacity="0.5" stroke-dasharray="2.5 3.1" stroke-dashoffset="3.5" fill="none"/>
<path d="M380 262.9L800 292.5" stroke="#a2a2a2" stroke-width="0.88" stroke-opacity="0.5" stroke-dasharray="2.5 3.1" stroke-dashoffset="0.0" fill="none"/>
<path d="M380 261.9L800 290.2" stroke="#a2a2a2" stroke-width="0.84" stroke-opacity="0.5" stroke-dasharray="2.5 3.1" stroke-dashoffset="0.0" fill="none"/>
<path d="M380 261.1L800 288.5" stroke="#a2a2a2" stroke-width="0.81" stroke-opacity="0.5" stroke-dasharray="2.5 3.1" stroke-dashoffset="1.8" fill="none"/>
<path d="M380 259.1L800 283.9" stroke="#a2a2a2" stroke-width="0.74" stroke-opacity="0.25" stroke-dasharray="2.5 3.1" stroke-dashoffset="1.8" fill="none"/>
<path d="M380 258.5L800 282.5" stroke="#a2a2a2" stroke-width="0.72" stroke-opacity="0.25" stroke-dasharray="2.5 3.1" stroke-dashoffset="3.5" fill="none"/>
<path d="M380 256.9L800 279.0" stroke="#a2a2a2" stroke-width="0.66" stroke-opacity="0.25" stroke-dasharray="2.5 3.1" stroke-dashoffset="3.5" fill="none"/>
<path d="M380 256.4L800 277.9" stroke="#a2a2a2" stroke-width="0.64" stroke-opacity="0.25" stroke-dasharray="2.5 3.1" stroke-dashoffset="0.0" fill="none"/>
<path d="M380 255.1L800 275.0" stroke="#a2a2a2" stroke-width="0.60" stroke-opacity="0.25" stroke-dasharray="2.5 3.1" stroke-dashoffset="0.0" fill="none"/>
<path d="M380 254.7L800 274.1" stroke="#a2a2a2" stroke-width="0.60" stroke-opacity="0.25" stroke-dasharray="2.5 3.1" stroke-dashoffset="1.8" fill="none"/>
<path d="M380 253.6L800 271.7" stroke="#a2a2a2" stroke-width="0.60" stroke-opacity="0.25" stroke-dasharray="2.5 3.1" stroke-dashoffset="1.8" fill="none"/>
<path d="M380 253.3L800 271.0" stroke="#a2a2a2" stroke-width="0.60" stroke-opacity="0.25" stroke-dasharray="2.5 3.1" stroke-dashoffset="3.5" fill="none"/>
<path d="M380 252.4L800 269.0" stroke="#a2a2a2" stroke-width="0.60" stroke-opacity="0.25" stroke-dasharray="2.5 3.1" stroke-dashoffset="3.5" fill="none"/>
<path d="M380 252.2L800 268.4" stroke="#a2a2a2" stroke-width="0.60" stroke-opacity="0.25" stroke-dasharray="2.5 3.1" stroke-dashoffset="0.0" fill="none"/>
<path d="M380 251.4L800 266.7" stroke="#a2a2a2" stroke-width="0.60" stroke-opacity="0.25" stroke-dasharray="2.5 3.1" stroke-dashoffset="0.0" fill="none"/>
<path d="M380 251.2L800 266.2" stroke="#a2a2a2" stroke-width="0.60" stroke-opacity="0.25" stroke-dasharray="2.5 3.1" stroke-dashoffset="1.8" fill="none"/>
<path d="M380 250.5L800 264.8" stroke="#a2a2a2" stroke-width="0.60" stroke-opacity="0.25" stroke-dasharray="2.5 3.1" stroke-dashoffset="1.8" fill="none"/>
<path d="M330.0 340L598.2 275.4M336.0 340L600.3 275.4M376.0 340L614.7 275.4M382.0 340L616.9 275.4M422.0 340L631.3 275.4M428.0 340L633.4 275.4M468.0 340L647.8 275.4M474.0 340L650.0 275.4M514.0 340L664.4 275.4M520.0 340L666.6 275.4M560.0 340L681.0 275.4M566.0 340L683.1 275.4M606.0 340L697.5 275.4M612.0 340L699.7 275.4M652.0 340L714.1 275.4M658.0 340L716.2 275.4M698.0 340L730.6 275.4M704.0 340L732.8 275.4" stroke="#a4a4a4" stroke-width="1.7" stroke-opacity=".6" stroke-dasharray="2 3.6" fill="none"/>
<path d="M440 248H760V300H440Z" fill="url(#pavdark)"/>
</g>
<path d="M446.2 269L513.3 276.2" stroke="#b0b0b0" stroke-width="1.8" stroke-dasharray="3.4 2.4" fill="none"/>
<path d="M708.9 270.6L641 323.2" stroke="#b4b4b4" stroke-width="2.6" stroke-dasharray="2.2 2.6" fill="none"/>
<path d="M460 287.5L532.2 297" stroke="#a8a8a8" stroke-width="3" stroke-dasharray="6 2.5" fill="none"/>
<path d="M434 323.5L532 297.2" stroke="#9a9a9a" stroke-width="2.2" stroke-dasharray="7 5" fill="none"/>
<path d="M724 252L748 251L745.5 271.5L712 269.5Z" fill="#303032"/>
<path d="M730 252L722 270M738 251.5L733 271M745 252L742 271.3" stroke="#4c4c4e" stroke-width=".7" fill="none"/>
<path d="M735 225H742V246.5H735Z" fill="url(#stripesd)"/>
<path d="M734 222.6L746 222.9V225.6L734 225.3Z" fill="#3a3a3c"/>
<path d="M601 209L712 202.5L726 199.5L737.5 217L733.5 219.5H657.8L636 216L601 214Z" fill="#4a4a4d"/>
<path d="M601 206.2L725.9 196.8L739.2 217L736.4 219.6L723.6 201.4L601 210.6Z" fill="#363638"/>
<path d="M602.6 217.5H636.2V256H602.6Z" fill="#fbfbfb"/>
<path d="M636.2 216L657.8 219.7V252.9L636.2 255.4Z" fill="#c9c9cb"/>
<path d="M639.3 225H644V254.4H639.3Z" fill="#4d5557"/><path d="M640.3 226H643.2V253.6H640.3Z" fill="#a9c2c6"/>
<path d="M657.8 216H729.2V257.5L657.8 256Z" fill="url(#stripes)"/>
<path d="M728.6 218.2L733.4 219.5V253.7L728.6 257.5Z" fill="url(#stripesd)"/>
<path d="M657.8 256L728.8 257.5L728.8 259L657.8 257.3Z" fill="#8a8a8a"/>
<path d="M657.8 216H733.4V219L728.8 218.6H657.8Z" fill="#2a1a14" fill-opacity=".75"/>
<path d="M487.9 193.4L583 182V212L487.9 211Z" fill="url(#stripes)"/>
<path d="M582.2 181.5L618.8 195.5V204L582.2 212Z" fill="url(#stripesd)"/>
<path d="M499.5 193.4L517.5 191.5V212.5H499.5Z" fill="#3d4446"/>
<path d="M500.8 194.6L507.6 193.9V211.6H500.8ZM509.4 193.7L516.3 193V211.6H509.4Z" fill="#b4c9cc"/>
<rect x="556.3" y="187.6" width="9.4" height="5.4" fill="#44494b"/><rect x="557.3" y="188.5" width="7.4" height="3.6" fill="#bcd2d6"/>
<rect x="603" y="192.8" width="4" height="4.4" fill="#44494b"/><rect x="603.8" y="193.6" width="2.4" height="2.8" fill="#bcd2d6"/>
<path d="M481 192.4L582.5 180L621 194.5L618.8 196L582.5 182.6L487.9 193.8Z" fill="#55555a"/>
<path d="M479.7 189.4L583.2 175.9L626 191.2L624.3 194.4L582.8 180.2L480.8 192.8Z" fill="#363638"/>
<path d="M440.1 200.9L488 196.3M440.1 203.4L488 199.7M440.1 205.9L488 203.1M440.1 208.4L488 206.5M440.1 210.9L488 209.9M440.1 200.9V211.6M446.9 200.2V211.7M453.8 199.6V211.8M460.6 198.9V211.9M467.5 198.3V211.9M474.3 197.6V212.0M481.2 197.0V212.1M488.0 196.3V212.2" stroke="#4d4d4d" stroke-width=".75" fill="none"/>
<path d="M488 196.3L520 199V201L488 198.6" stroke="#555" stroke-width=".6" fill="none"/>
<path d="M438.5 217.5H465.6V254.2L438.5 252.6Z" fill="#fcfcfc"/>
<path d="M465.6 218H499.8V254.6L487 256L465.6 254.4Z" fill="#3b4244"/>
<path d="M467.2 219.4H475.5V253.2H467.2ZM477 219.4H485.6V253.8H477ZM489.4 219.4H498.4V253.4H489.4Z" fill="#aec5c8"/>
<path d="M467.2 224.2H498.4V225.6H467.2Z" fill="#3b4244"/>
<path d="M486 214H488.8V258.5H486Z" fill="#333335"/>
<path d="M500.3 218L522.7 218.4V251.9L500.3 253.6Z" fill="#c9c9cb"/>
<path d="M522.7 218.4H602.6V253.5H522.7Z" fill="#fcfcfc"/>
<path d="M522.7 219H531V252.6H522.7Z" fill="#3b4244"/><path d="M523.6 220H530V251.8H523.6Z" fill="#a9c0c4"/>
<path d="M537 219.2H554.8V252.6H537Z" fill="#3b4244"/><path d="M538 220.2H545.3V251.8H538ZM546.6 220.2H553.8V251.8H546.6Z" fill="#aec5c8"/><path d="M537 225H554.8V226.2H537Z" fill="#3b4244"/>
<path d="M555.5 219.2H575.8V239.6H555.5Z" fill="#2f3436"/><path d="M556.6 220.2H574.7V224.8H556.6ZM556.6 226.4H565V238.4H556.6ZM566.4 226.4H574.7V238.4H566.4Z" fill="#b3c9cc"/>
<path d="M583.3 219.2H602.6V253.4H583.3Z" fill="#3b4244"/><path d="M584.3 220.2H601.6V225H584.3Z" fill="#b3c9cc"/><path d="M586.4 226H598.8V253.4H586.4Z" fill="#3a3a3e"/><path d="M584.3 226H585.6V252.8H584.3ZM599.8 226H601.6V252.8H599.8Z" fill="#a9c0c4"/>
<path d="M438.5 252.6L487 256.2L522.7 252L602.6 253.4L657.8 256V257.6L602.6 255L522.7 253.8L487 258.2L438.5 254.4Z" fill="#6f6f70"/>
<path d="M429.3 216.4L487.2 215.4L520 216.6L608 212.4V218.4L520 219.6L487.2 219L438 218.4Z" fill="#55555a"/>
<path d="M428.1 214.1L487.2 210.8L520 212.6L607 208V213L520 217.4L487.2 216L429 217.2Z" fill="#363638"/>
<path d="M608.8 209H612.7V260.2H608.8Z" fill="#3a3a3c"/>
<path d="M711 203.5H715.2V267.6H711Z" fill="#444446"/>
</g>
<rect x="379.9" y="126.7" width="403.4" height="199.9" fill="none" stroke="#ebe7e3" stroke-width="1"/>
<rect x="380.4" y="127.35" width="401.9" height="198.15" fill="none" stroke="#1fbcfb" stroke-width="1.5"/>
<circle cx="380.5" cy="127.5" r="5.7" fill="#04b8fd"/>
<circle cx="782.5" cy="127.5" r="5.7" fill="#04b8fd"/>
<circle cx="380.5" cy="325.4" r="5.7" fill="#04b8fd"/>
<circle cx="782.5" cy="325.4" r="5.7" fill="#04b8fd"/>
</svg>
<!-- IMGS-END -->

<span class="t" id="t-ref" style="left:220.6px;top:443.2px;font-size:23px;color:#141414;-webkit-text-stroke:0.7px #141414;letter-spacing:0.72px">Reference</span>
<span class="t" id="t-img" style="left:241.5px;top:472.6px;font-size:23px;color:#141414;-webkit-text-stroke:0.7px #141414;letter-spacing:1.4px">Image</span>
<!-- toolbar -->
<div id="toolbar"></div>
<div class="vdiv" style="left:252.5px;top:71px;height:24px"></div>
<div id="rd-btn"></div>
<span class="t" id="t-rd" style="left:293.7px;top:76px;font-size:14.2px;color:#f2b3ea;letter-spacing:-0.266px">Render design</span>
<span class="t" id="t-em" style="left:431.3px;top:76px;font-size:14.2px;letter-spacing:-0.280px">Edit Material</span>
<span class="t" id="t-po" style="left:555.8px;top:76px;font-size:14.2px;letter-spacing:-0.459px">Populate</span>
<span class="t" id="t-gs" style="left:658.0px;top:76px;font-size:14.2px;letter-spacing:-0.252px">Generate style</span>
<div class="vdiv" style="left:763.5px;top:71px;height:24px"></div>
<div class="vdiv" style="left:868.5px;top:71px;height:24px"></div>
<div class="vdiv" style="left:909px;top:71px;height:24px"></div>
<svg class="abs" style="left:0;top:0;pointer-events:none" width="1247" height="583" fill="none" stroke-linecap="round" stroke-linejoin="round">
<defs>
<linearGradient id="chatg" x1="223" y1="91" x2="241" y2="75" gradientUnits="userSpaceOnUse"><stop offset="0" stop-color="#f3b2f0"/><stop offset="1" stop-color="#b9b6ff"/></linearGradient>
<radialGradient id="glow" cx="232" cy="83" r="17" gradientUnits="userSpaceOnUse"><stop offset="0" stop-color="#b48bd0" stop-opacity=".26"/><stop offset="1" stop-color="#b48bd0" stop-opacity="0"/></radialGradient>
</defs>
<circle cx="232" cy="83" r="17" fill="url(#glow)"/>
<!-- chat sparkle icon -->
<path d="M231 78.2H225.3Q223.9 78.2 223.9 79.6V91.2L226.2 89.3H237.2Q238.6 89.3 238.6 87.9V85.3" stroke="url(#chatg)" stroke-width="1.7"/>
<path d="M238.3 73.8Q239.2 77.2 242.6 78.1Q239.2 79 238.3 82.4Q237.4 79 234 78.1Q237.4 77.2 238.3 73.8Z" fill="url(#chatg)" stroke="url(#chatg)" stroke-width=".5"/>
<!-- render design icon -->
<g stroke="#dca3d6" stroke-width="1.1">
<path d="M270.6 75.3H275.8Q276.9 75.3 276.9 76.4V90.2H269.6V76.3Q269.6 75.3 270.6 75.3Z"/>
<path d="M276.9 79.7H284.3Q285.4 79.7 285.4 80.8V89.1Q285.4 90.2 284.3 90.2H276.9"/>
<path d="M273.2 75.3V90.2M269.6 79.3H276.9M269.6 83H281M269.6 86.7H281M279.5 82.2L282.5 84.2M282.5 82.2L279.5 84.2" stroke-width="1"/>
</g>
<!-- edit material -->
<g stroke="#e9e9e9" stroke-width="1.3">
<rect x="407.8" y="75.5" width="14.8" height="14.9" rx="0.8"/>
<path d="M411.6 83.2L415.4 79.4M411.6 86.6L418.8 79.4M415 86.6L418.8 82.8" stroke-width="1.1"/>
</g>
<circle cx="418.6" cy="85.6" r="0.8" fill="#e9e9e9"/>
<!-- populate -->
<g fill="#f4f4f4">
<circle cx="534.7" cy="76.4" r="1.6"/><path d="M532 78.7H536.3L535.6 84.4H535.4V88.6H533.3V84.4H532Z"/>
<circle cx="544.5" cy="76.4" r="1.6"/><path d="M547.2 78.7H542.9L543.6 84.4H543.8V88.6H545.9V84.4H547.2Z"/>
<circle cx="539.6" cy="78" r="1.8"/><path d="M537 80.4H542.2V86H541V90.6H538.2V86H537Z"/>
</g>
<!-- generate style -->
<g stroke="#ececec" stroke-width="1.2">
<path d="M637.6 77.7L645.3 74.6L650.5 87.3L642.2 90.6Z"/>
<path d="M634.3 85.9Q633.4 87.2 634.4 88.6M637.4 86.4Q637 88.2 638.5 90"/>
</g>
<circle cx="640.9" cy="79.5" r="0.9" fill="#ececec"/>
<!-- image sparkle -->
<g stroke="#e4e4e4" stroke-width="1.4">
<path d="M784.6 76.4H778.2Q776.7 76.4 776.7 77.9V89Q776.7 90.4 778.2 90.4H789.2Q790.6 90.4 790.6 89V82.2"/>
</g>
<path d="M779.4 87.7L782 83.8L783.7 86L785.9 83.3L789 87.7Z" fill="#e4e4e4"/>
<path d="M789.6 73.6L790.6 75.8L793.1 75.6L791.7 77.6L793.1 79.6L790.6 79.4L789.6 81.6L788.6 79.4L786.1 79.6L787.5 77.6L786.1 75.6L788.6 75.8Z" fill="#f4f4f4"/>
<!-- expand -->
<g stroke="#dedede" stroke-width="1.4">
<path d="M809 78V77.2Q809 75.8 810.4 75.8H811.2M813.8 75.8H816.4M824.2 82.6V85.4M824.2 88V89Q824.2 90.3 822.8 90.3H821.2"/>
<path d="M819.8 80.2L824.2 75.8M820.6 75.8H824.2V79.4"/>
<rect x="809" y="82" width="8.6" height="8.3" rx="1.3"/>
<path d="M810.6 90L814.6 86.2L817 87.6" stroke-width="1.1"/>
</g>
<!-- download -->
<g stroke="#f0f0f0" stroke-width="1.5">
<path d="M848.4 75.6V85.2M844.9 81.8L848.4 85.3L851.9 81.8M841.9 86.8V88.4Q841.9 89.8 843.3 89.8H853.5Q854.9 89.8 854.9 88.4V86.8"/>
</g>
<!-- focus -->
<g stroke="#e6e6e6" stroke-width="1.25">
<path d="M881.9 79.4V77.4Q881.9 75.8 883.5 75.8H885.6M893 75.8H895.1Q896.7 75.8 896.7 77.4V79.4M896.7 86.6V88.6Q896.7 90.2 895.1 90.2H893M885.6 90.2H883.5Q881.9 90.2 881.9 88.6V86.6"/>
<circle cx="889.3" cy="83" r="2.3"/>
</g>
</svg>

<!-- top right bar -->
<div id="topbar"></div>
<div id="avatar-pill"></div>
<div id="avatar"></div>
<span class="t" id="t-b" style="left:1078px;top:9px;font-size:11px;color:#ffd0e0;-webkit-text-stroke:0">B</span>
<div class="vdiv" style="left:1126px;top:0;height:29px"></div>
<div id="share"></div>
<span class="t" id="t-share" style="left:1171.4px;top:7px;font-size:14px;letter-spacing:-0.568px">Share</span>
<svg class="abs" style="left:0;top:0;pointer-events:none" width="1247" height="583" fill="none" stroke-linecap="round" stroke-linejoin="round">
<path d="M1100.6 12.4L1104 15.8L1107.4 12.4" stroke="#f0f0f0" stroke-width="1.4"/>
<g stroke="#ededed" stroke-width="1.4">
<path d="M1155.1 7.2V16M1151.8 10.5L1155.1 7.2L1158.4 10.5"/>
<path d="M1149.6 13.4V18.8Q1149.6 20.2 1151 20.2H1159.2Q1160.6 20.2 1160.6 18.8V13.4"/>
</g>
</svg>

<!-- panel -->
<div id="panel"></div>
<span class="t" id="t-title" style="left:923.1px;top:63.1px;font-size:15px;letter-spacing:-0.156px">Render design</span>
<div class="hdiv" style="left:923px;top:89px;width:296px"></div>
<span class="t" id="t-imgref" style="left:925.2px;top:105.1px;font-size:14px;letter-spacing:-0.140px">Image reference</span>
<div id="drop"></div>
<span class="t" id="t-drag" style="left:965.6px;top:146.4px;font-size:14px;-webkit-text-stroke:0.65px currentColor;letter-spacing:-0.071px">Drag media here or click to upload</span>
<span class="t grey" id="t-png" style="left:1004.4px;top:174.3px;font-size:14px;letter-spacing:-0.647px">PNG, JPG • Max 10MB</span>
<span class="t grey" id="t-eg" style="left:956.9px;top:194.5px;font-size:14px;letter-spacing:-0.223px">e.g. CAD Screenshot, physical model,</span>
<span class="t grey" id="t-sr" style="left:1005.6px;top:213.8px;font-size:14px;letter-spacing:-0.055px">simple render, sketch</span>
<div class="hdiv" style="left:925px;top:254px;width:292px"></div>
<span class="t" id="t-desc" style="left:925.4px;top:268.3px;font-size:14px;letter-spacing:-0.003px">Description</span>
<span class="t" id="t-rec" style="left:925.4px;top:298.1px;font-size:11.5px;letter-spacing:0.227px">Recommended prompt formula</span>
<span class="t" id="t-f1" style="left:925.4px;top:318.2px;font-size:11.5px;letter-spacing:0.063px"><i>[</i>Main Subject<i>]</i><u> , </u><i>[</i>Context &amp; Key Features<i>]</i><u> ,</u></span>
<span class="t" id="t-f2" style="left:925.4px;top:338.3px;font-size:11.5px;letter-spacing:0.104px"><i>[</i>Atmosphere &amp; Lighting<i>]</i><u> , </u><i>[</i>Style<i>]</i><u> , </u><i>[</i>Extra Keywords<i>]</i></span>
<div id="ta"></div>
<span class="t grey" id="t-ph" style="left:934.4px;top:367.4px;font-size:14px;letter-spacing:-0.234px">Enter a description...</span>
<div id="enh"></div>
<span class="t dim" id="t-enh" style="left:949.4px;top:467px;font-size:12px;letter-spacing:-0.097px">Enhance prompt</span>
<div class="hdiv" style="left:923px;top:496px;width:296px"></div>
<div id="gen"></div>
<span class="t dim" id="t-gen" style="left:1042.9px;top:517px;font-size:14px;letter-spacing:-0.341px">Generate</span>
<svg class="abs" style="left:0;top:0;pointer-events:none" width="1247" height="583" fill="none" stroke-linecap="round" stroke-linejoin="round">
<g stroke="#f0f0f0" stroke-width="1.5">
<rect x="1199.1" y="62" width="15.9" height="15.9" rx="2.8"/>
<path d="M1199.1 67.4H1215M1204.1 73.7L1207.1 71L1210.1 73.7"/>
</g>
<g stroke="#e6e6e6" stroke-width="1.2">
<path d="M1202.6 279.8Q1202.6 278.2 1200.7 276.3A6 6 0 1 1 1209.3 276.3Q1207.4 278.2 1207.4 279.8Z"/>
<path d="M1202.6 283.6H1207.4"/>
</g>
<circle cx="1099.9" cy="303" r="4.5" stroke="#cfcfcf" stroke-width="1"/>
<path d="M1099.9 302.4V305.4" stroke="#bdbdbd" stroke-width="1.1"/>
<circle cx="1099.9" cy="300.6" r="0.6" fill="#bdbdbd"/>
<g stroke="#8a8a8a" stroke-width="1.1">
<path d="M932.4 470.4H937.2M932.4 473.2H939.4M932.4 476H939.4"/>
</g>
<path d="M940.8 466.6Q941.1 468.9 943.4 469.2Q941.1 469.5 940.8 471.8Q940.5 469.5 938.2 469.2Q940.5 468.9 940.8 466.6Z" fill="#8a8a8a"/>
<path d="M1214.6 442.6L1209.6 447.6M1214.6 445.4L1212.4 447.6" stroke="#9a9a9a" stroke-width="1"/>
</svg>
</div>
</body>
</html>
